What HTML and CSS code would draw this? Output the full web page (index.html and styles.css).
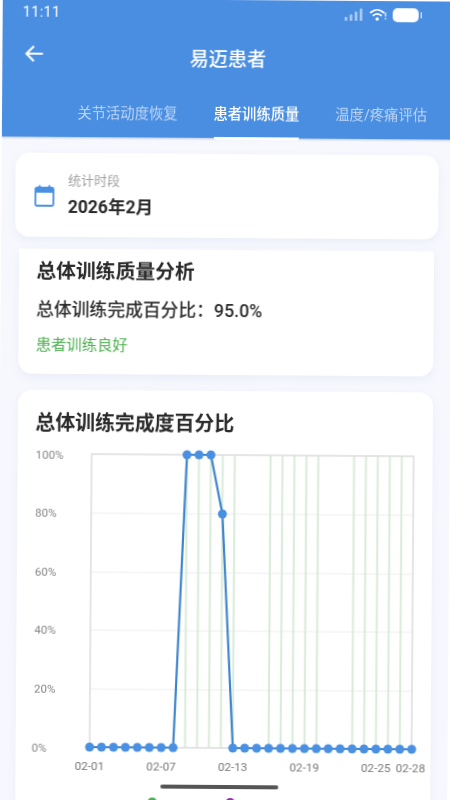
FILE: index.html
```html
<!DOCTYPE html>
<html lang="zh">
<head>
<meta charset="utf-8">
<title>易迈患者</title>
<link rel="stylesheet" href="styles.css">
</head>
<body>
<div class="app">
  <header class="header">
    <div class="status">
      <span class="time">11:11</span>
      <span class="status-icons">
        <svg class="signal" width="20" height="14" viewBox="0 0 20 14"><rect x="0" y="9" width="2.6" height="4" rx="1"/><rect x="5" y="6.5" width="2.6" height="6.5" rx="1"/><rect x="10" y="3.5" width="2.6" height="9.5" rx="1"/><rect x="15" y="0.5" width="2.6" height="12.5" rx="1"/></svg>
        <svg class="wifi" width="17" height="14" viewBox="0 0 17 14"><path d="M1 4.5C5 1 10 1 14 4.5M3.6 7.4C6.2 5.3 8.8 5.3 11.4 7.4" fill="none" stroke="#fff" stroke-width="1.7" stroke-linecap="round"/><circle cx="7.5" cy="11" r="1.7" fill="#fff"/><rect x="15.2" y="4.5" width="1.2" height="4" fill="#fff"/><rect x="15.2" y="9.8" width="1.2" height="1.5" fill="#fff"/></svg>
        <span class="battery"></span><span class="battery-tip"></span>
      </span>
    </div>
    <div class="titlebar">
      <svg class="back" width="20" height="18" viewBox="0 0 20 18"><path d="M18.5 9H2M9.5 1.5 2 9l7.5 7.5" fill="none" stroke="#fff" stroke-width="2.1"/></svg>
      <h1 class="title">易迈患者</h1>
    </div>
    <nav class="tabs">
      <span class="tab">关节活动度恢复</span>
      <span class="tab active">患者训练质量</span>
      <span class="tab">温度/疼痛评估</span>
    </nav>
  </header>

  <main class="content">
    <section class="card period">
      <svg class="cal" width="20" height="22" viewBox="0 0 20 22"><path d="M2.5 3h15a1.5 1.5 0 0 1 1.5 1.5v15a1.5 1.5 0 0 1-1.5 1.5h-15A1.5 1.5 0 0 1 1 19.500v-15A1.500 1.500 0 0 1 2.500 3z" fill="none" stroke="#4a90e2" stroke-width="1.800"/><rect x="1" y="3" width="18" height="5" fill="#4a90e2"/><rect x="4.200" y="0.500" width="2" height="4" fill="#4a90e2"/><rect x="13.800" y="0.500" width="2" height="4" fill="#4a90e2"/></svg>
      <div class="period-text">
        <div class="period-label">统计时段</div>
        <div class="period-value">2026年2月</div>
      </div>
    </section>

    <section class="card summary">
      <h2 class="card-title">总体训练质量分析</h2>
      <p class="summary-line">总体训练完成百分比：95.0%</p>
      <p class="summary-note">患者训练良好</p>
    </section>

    <section class="card chart-card">
      <h2 class="card-title">总体训练完成度百分比</h2>
      <svg class="chart" width="415" height="340" viewBox="17 440 415 340">
        <g class="grid">
          <path d="M91 514H413M91 573H413M91 631H413M91 690H413"/>
        </g>
        <g class="bars">
          <path d="M186.400 455V748M198.400 455V748M210.300 455V748M222.200 455V748M234.200 455V748M270 455V748M281.900 455V748M293.800 455V748M305.800 455V748M317.700 455V748M353.500 455V748M365.400 455V748M377.300 455V748M389.300 455V748M401.200 455V748"/>
        </g>
        <rect class="frame" x="91" y="455" width="322" height="293"/>
        <g class="y-labels">
          <text x="35" y="460">100%</text>
          <text x="35" y="518">80%</text>
          <text x="35" y="577">60%</text>
          <text x="35" y="635">40%</text>
          <text x="35" y="694">20%</text>
          <text x="33" y="753">0%</text>
        </g>
        <g class="x-labels">
          <text x="91" y="771">02-01</text>
          <text x="162.600" y="771">02-07</text>
          <text x="234.200" y="771">02-13</text>
          <text x="305.800" y="771">02-19</text>
          <text x="377.300" y="771">02-25</text>
          <text x="412" y="771">02-28</text>
        </g>
        <polyline class="line" points="91,748 174.500,748 186.400,455 198.400,455 210.300,455 222.200,514 234.200,748 413.100,748"/>
        <g class="dots">
          <circle cx="91" cy="748" r="4.500"/><circle cx="102.900" cy="748" r="4.500"/><circle cx="114.900" cy="748" r="4.500"/><circle cx="126.800" cy="748" r="4.500"/><circle cx="138.700" cy="748" r="4.500"/><circle cx="150.700" cy="748" r="4.500"/><circle cx="162.600" cy="748" r="4.500"/><circle cx="174.500" cy="748" r="4.500"/>
          <circle cx="186.400" cy="455" r="4.500"/><circle cx="198.400" cy="455" r="4.500"/><circle cx="210.300" cy="455" r="4.500"/><circle cx="222.200" cy="514" r="4.500"/>
          <circle cx="234.200" cy="748" r="4.500"/><circle cx="246.100" cy="748" r="4.500"/><circle cx="258" cy="748" r="4.500"/><circle cx="270" cy="748" r="4.500"/><circle cx="281.900" cy="748" r="4.500"/><circle cx="293.800" cy="748" r="4.500"/><circle cx="305.800" cy="748" r="4.500"/><circle cx="317.700" cy="748" r="4.500"/><circle cx="329.600" cy="748" r="4.500"/><circle cx="341.500" cy="748" r="4.500"/><circle cx="353.500" cy="748" r="4.500"/><circle cx="365.400" cy="748" r="4.500"/><circle cx="377.300" cy="748" r="4.500"/><circle cx="389.300" cy="748" r="4.500"/><circle cx="401.200" cy="748" r="4.500"/><circle cx="413.100" cy="748" r="4.500"/>
        </g>
      </svg>
      <div class="legend">
        <span class="legend-dot green"></span>
        <span class="legend-dot purple"></span>
      </div>
    </section>
  </main>
  <div class="home-bar"></div>
</div>
</body>
</html>
```
FILE: styles.css
```css
* { box-sizing: border-box; }
html, body { margin: 0; padding: 0; background: #fff; }
body {
  width: 450px;
  height: 800px;
  overflow: hidden;
  font-family: Roboto, "Noto Sans CJK SC", sans-serif;
}
.app {
  position: relative;
  width: 450px;
  height: 804px;
  overflow: hidden;
  background: #f7f8fe;
  transform: rotate(0.4deg);
  filter: blur(0.35px);
}
.header {
  height: 138px;
  background: #4a8ee2;
  color: #fff;
  box-shadow: 0 1px 2px rgba(60, 100, 170, .35);
}
.status {
  height: 34px;
  display: flex;
  justify-content: space-between;
  align-items: flex-start;
  padding: 5px 31px 0 20px;
}
.time { font-size: 14.500px; letter-spacing: .3px; line-height: 17px; }
.status-icons { display: flex; align-items: center; margin-top: 2px; }
.signal { fill: rgba(255, 255, 255, .55); margin-right: 5px; }
.wifi { margin-right: 6px; }
.battery { width: 26px; height: 14px; border-radius: 5px; background: #fff; }
.battery-tip { width: 1.500px; height: 6px; background: #fff; margin-left: 1.500px; }
.titlebar {
  position: relative;
  display: flex;
  justify-content: center;
  align-items: center;
  height: 52px;
}
.back { position: absolute; left: 22px; top: 12px; }
.title { margin: 0 0 0 1px; font-size: 19.200px; font-weight: 500; line-height: 52px; }
.tabs {
  display: flex;
  justify-content: flex-end;
  gap: 36px;
  height: 52px;
  padding: 10px 25px 0 0;
  white-space: nowrap;
}
.tab {
  height: 44px;
  font-size: 14.300px;
  line-height: 36px;
  color: rgba(255, 255, 255, .62);
}
.tab.active {
  color: #fff;
  font-weight: 500;
  border-bottom: 3px solid #fff;
  border-radius: 0 0 2px 2px;
}
.content {
  display: flex;
  flex-direction: column;
  align-items: center;
  padding-top: 16px;
}
.card {
  background: #fff;
  border-radius: 14px;
  box-shadow: 0 3px 8px rgba(90, 110, 170, .08);
}
.period {
  width: 423px;
  height: 84px;
  display: flex;
  align-items: center;
  padding-left: 19px;
  gap: 14px;
}
.cal { margin-top: 2px; flex: none; }
.period-label { font-size: 13px; color: #a3a3a3; line-height: 20px; }
.period-value { font-size: 17.500px; font-weight: 700; color: #2b2b2b; line-height: 24px; margin-top: 4px; }
.summary {
  width: 415px;
  height: 125px;
  margin-top: 12px;
  padding: 8px 18px 0;
  border-radius: 0 0 14px 14px;
}
.card-title { margin: 0; font-size: 19.800px; font-weight: 700; color: #2a2a2a; line-height: 30px; }
.summary-line { margin: 10px 0 0; font-size: 17.800px; font-weight: 500; color: #2d2d2d; line-height: 26px; }
.summary-note { margin: 10px 0 0; font-size: 15.300px; color: #4caf50; line-height: 24px; }
.chart-card {
  width: 415px;
  height: 420px;
  margin-top: 16px;
  padding-top: 19px;
}
.chart-card .card-title { padding-left: 18px; font-size: 19.900px; }
.chart { display: block; }
.grid path { stroke: #eeeeee; stroke-width: 1; fill: none; }
.bars path { stroke: #d9ecd9; stroke-width: 2; fill: none; }
.frame { fill: none; stroke: #dddddd; stroke-width: 1.500; }
.y-labels text { font-size: 11.500px; fill: #858585; }
.x-labels text { font-size: 11.700px; fill: #777; text-anchor: middle; }
.line { fill: none; stroke: #3f85cc; stroke-width: 2.200; }
.dots circle { fill: #4a90e2; }
.legend { display: flex; padding: 18px 0 0 132px; gap: 68px; }
.legend-dot { width: 10px; height: 10px; border-radius: 50%; }
.legend-dot.green { background: #4caf50; }
.legend-dot.purple { background: #9c27b0; }
.home-bar {
  position: absolute;
  left: 163px;
  top: 785px;
  width: 118px;
  height: 4px;
  border-radius: 2px;
  background: #555;
}
```
